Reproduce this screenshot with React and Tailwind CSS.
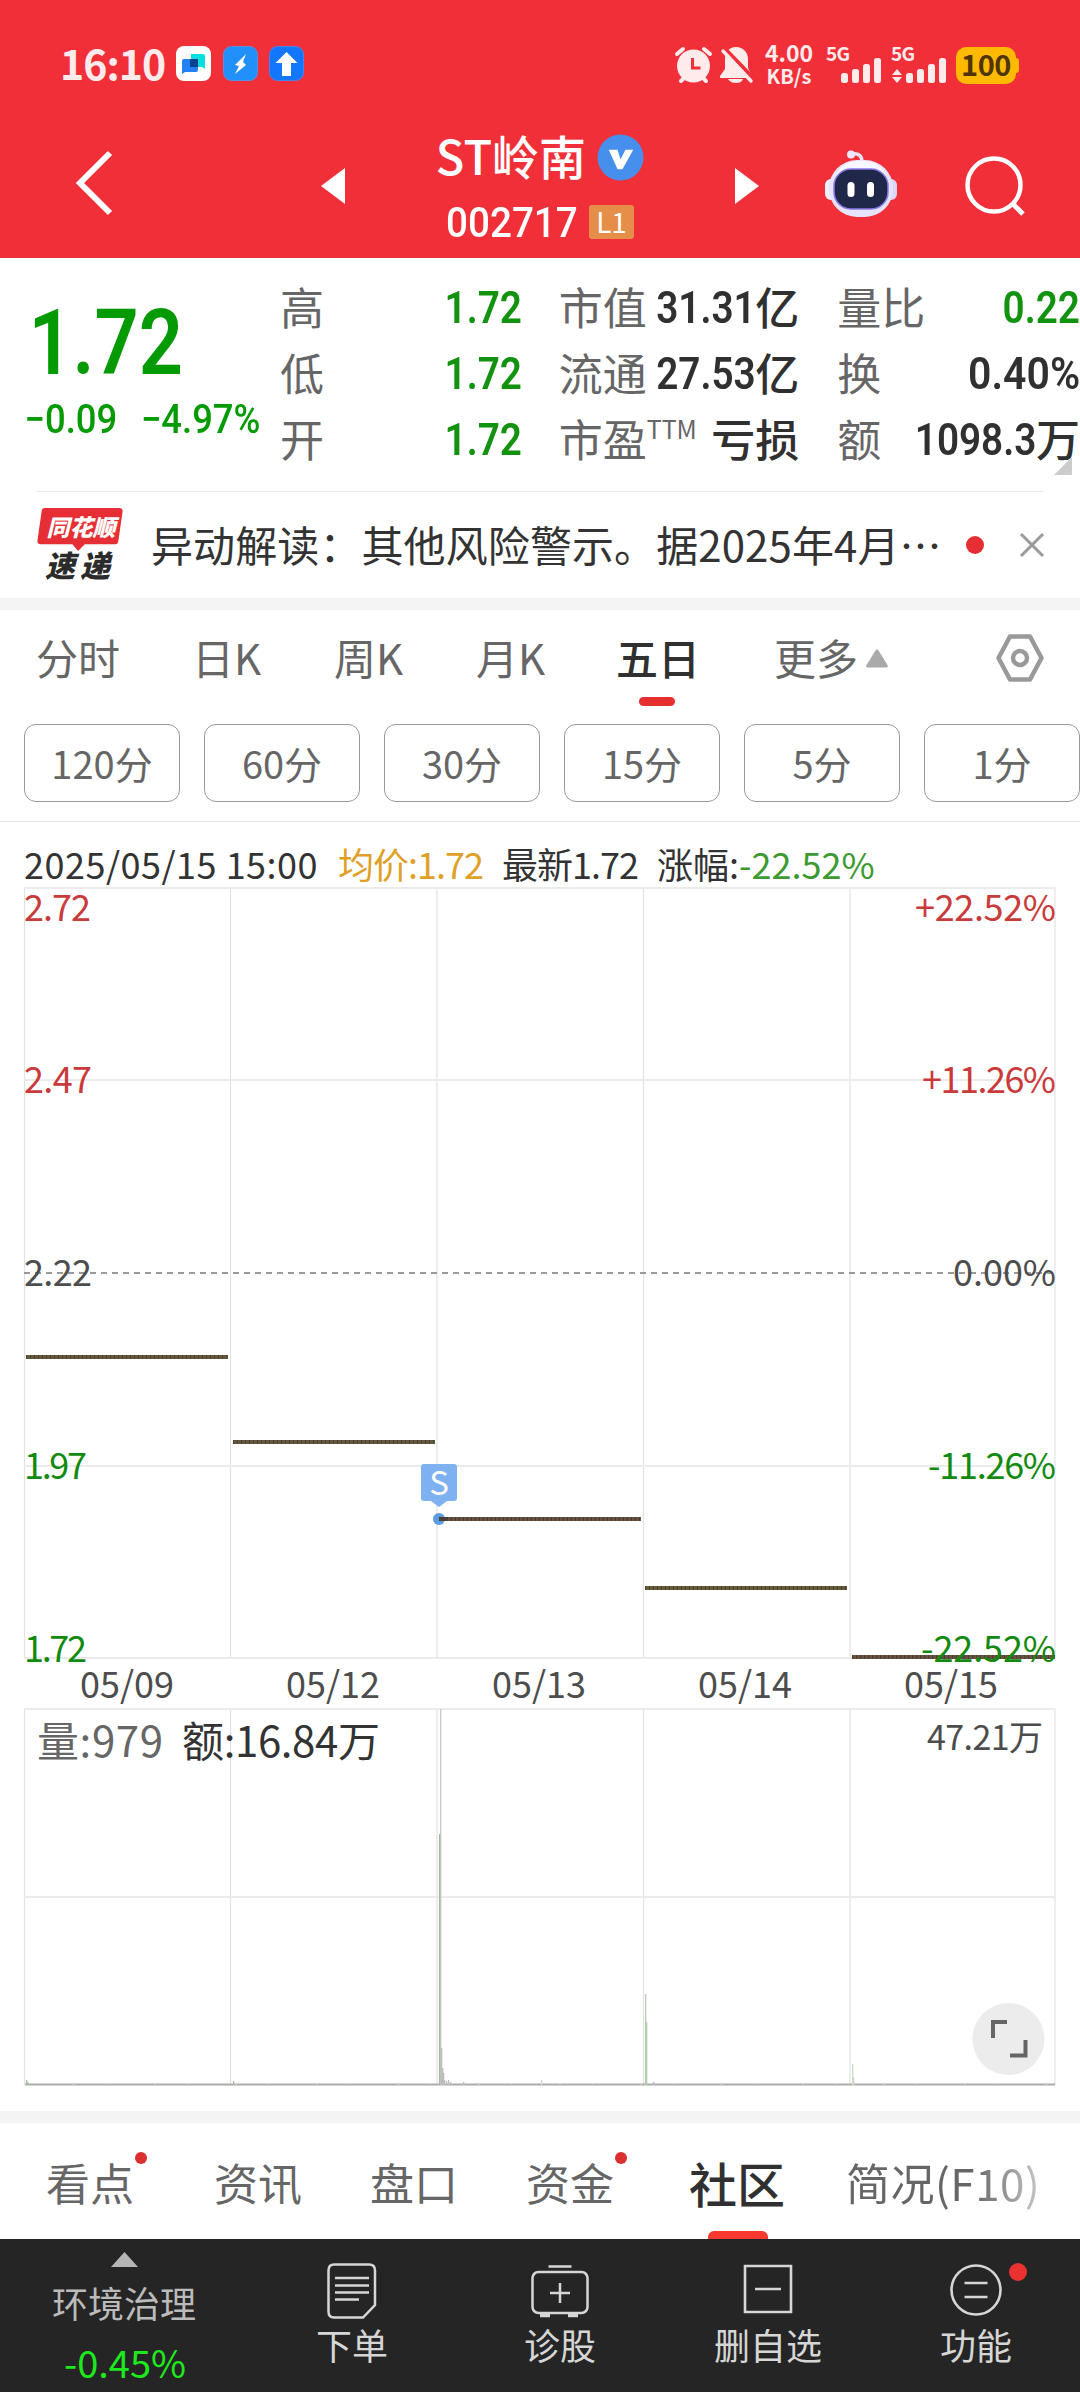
import { useState } from 'react';

const quoteRows = [
  [
    { label: '高', value: '1.72', green: true },
    { label: '低', value: '1.72', green: true },
    { label: '开', value: '1.72', green: true },
  ],
  [
    { label: '市值', value: '31.31', unit: '亿' },
    { label: '流通', value: '27.53', unit: '亿' },
    { label: '市盈', sup: 'TTM', unit: '亏损' },
  ],
  [
    { label: '量比', value: '0.22', green: true },
    { label: '换', value: '0.40%', wide: true },
    { label: '额', value: '1098.3', unit: '万' },
  ],
];

const periods = [
  { name: '分时', width: 'w-[156px]' },
  { name: '日K', width: 'w-[142px]' },
  { name: '周K', width: 'w-[142px]' },
  { name: '月K', width: 'w-[140px]' },
  { name: '五日', width: 'w-[148px]' },
];

const minutes = ['120分', '60分', '30分', '15分', '5分', '1分'];

const days = [
  { date: '05/09', x1: 26, x2: 228, y: 1357, color: '#665a3c' },
  { date: '05/12', x1: 233, x2: 435, y: 1442, color: '#66583f' },
  { date: '05/13', x1: 439, x2: 641, y: 1519, color: '#665040' },
  { date: '05/14', x1: 645, x2: 847, y: 1588, color: '#665c3e' },
  { date: '05/15', x1: 852, x2: 1055, y: 1657, color: '#665040' },
];

const priceLabels = [
  { price: '2.72', pct: '+22.52%', y: 921, color: '#c93a3a', w: 67, pw: 141 },
  { price: '2.47', pct: '+11.26%', y: 1093, color: '#c93a3a', w: 68, pw: 134 },
  { price: '2.22', pct: '0.00%', y: 1286, color: '#4d4d4d', w: 68, pw: 103 },
  { price: '1.97', pct: '-11.26%', y: 1479, color: '#12890f', w: 63, pw: 128 },
  { price: '1.72', pct: '-22.52%', y: 1662, color: '#12890f', w: 63, pw: 135 },
];

// x, top, colour of each visible volume bar
const volumes = [
  [26, 2080, '#a3bf9c'], [27, 2082, '#a3bf9c'],
  [233, 2081, '#a3bf9c'],
  [440, 1709, '#c9c9c9'], [439, 1834, '#9dbd97'], [441, 2048, '#bdbdbd'], [442, 2068, '#bdbdbd'],
  [443, 2073, '#bdbdbd'], [444, 2080, '#bdbdbd'], [446, 2081, '#bdbdbd'], [448, 2080, '#bdbdbd'], [450, 2082, '#bdbdbd'],
  [463, 2082, '#bdbdbd'], [541, 2080, '#d5d5d5'],
  [645, 1994, '#b3cbae'], [646, 2022, '#b3cbae'], [653, 2082, '#bdbdbd'],
  [852, 2064, '#cbdcc2'], [853, 2077, '#d5d5d5'],
];

const sections = [
  { name: '看点', margin: 'ml-[46px]', dot: true },
  { name: '资讯', margin: 'ml-[80px]' },
  { name: '盘口', margin: 'ml-[68px]' },
  { name: '资金', margin: 'ml-[68px]', dot: true },
];

function StatusBar() {
  return (
    <div className="h-[128px] flex items-center text-[#ffeaec]">
      <div className="w-[101px] ml-[60px] pb-[4px] text-[41px] leading-none font-bold tracking-[-1px] whitespace-nowrap">16:10</div>
      <svg className="ml-[15px] w-[129px] h-[36px]" viewBox="0 0 129 36">
        <rect x="0" y="0" width="35" height="35" rx="8" fill="#fff" />
        <path d="M15 8h12q2 0 2 2v13l-3-2H15z" fill="#06dfe0" />
        <path d="M6 15q0-2 2-2h12q2 0 2 2v9q0 2-2 2H9l-3 2z" fill="#2480f5" />
        <rect x="14" y="13" width="8" height="8" fill="#07428f" />
        <rect x="47.5" y=".5" width="34" height="34" rx="8" fill="#2190fa" stroke="#5a8fe8" />
        <path d="M70 8L59 19l4 1-4 8 11-9-3-3z" fill="#fff" />
        <rect x="93.5" y=".5" width="34" height="34" rx="8" fill="#1276ff" stroke="#4b83ee" />
        <path d="M110.500 6l11 11h-6.500v13h-9V17h-6.500z" fill="#fff" />
      </svg>
      <svg className="ml-[369px] mt-[2px] w-[80px] h-[38px]" viewBox="0 0 80 38">
        <g stroke="#ffeaec" strokeWidth="4" strokeLinecap="round">
          <path d="M3 8l6-5M36 8l-6-5M7 35l5-5M32 35l-5-5" />
        </g>
        <circle cx="19.500" cy="20" r="16.500" fill="#ffeaec" />
        <path d="M18.500 12v10h8" fill="none" stroke="#f12f38" strokeWidth="3" />
        <path d="M62 1c7 0 12 5 12 12v9l4 8v2H46v-2l5-7V13c0-7 4-12 11-12z" fill="#ffeaec" />
        <path d="M54 33h15c-1 3-4 4-7 4s-6-1-8-4z" fill="#ffeaec" />
        <path d="M51 3l29 30" stroke="#f12f38" strokeWidth="4" />
        <path d="M49 5l28 30" stroke="#ffeaec" strokeWidth="3.500" strokeLinecap="round" />
      </svg>
      <div className="ml-[9px] w-[52px] h-[46px] flex flex-col justify-between items-center font-bold whitespace-nowrap">
        <div className="text-[23px] leading-[23px]">4.00</div>
        <div className="text-[20px] leading-[23px]">KB/s</div>
      </div>
      <svg className="ml-[9px] mt-[2px] w-[131px] h-[38px] font-bold overflow-visible" viewBox="0 0 131 38">
        <g fill="#ffeaec">
          <text x="2" y="15" fontSize="19" textLength="24">5G</text>
          <rect x="17" y="27" width="7" height="10" rx="2.500" />
          <rect x="28" y="23" width="7" height="14" rx="2.500" />
          <rect x="39" y="18" width="7" height="19" rx="2.500" />
          <rect x="50" y="12" width="7" height="25" rx="2.500" />
          <text x="67" y="15" fontSize="19" textLength="24">5G</text>
          <path d="M68 29l5-6 5 6zM68 31l5 6 5-6z" />
          <rect x="82" y="27" width="7" height="10" rx="2.500" />
          <rect x="93" y="23" width="7" height="14" rx="2.500" />
          <rect x="104" y="18" width="7" height="19" rx="2.500" />
          <rect x="115" y="12" width="7" height="25" rx="2.500" />
        </g>
      </svg>
      <div className="ml-[1px] mt-[2px] flex items-center">
        <div className="w-[60px] h-[37px] pb-[4px] rounded-[10px] bg-[#ffb900] text-[#4f3500] flex items-center justify-center text-[29px] leading-none font-bold tracking-[-0.5px]">100</div>
        <div className="w-[3px] h-[15px] rounded-r-sm bg-[#ffb900]" />
      </div>
    </div>
  );
}

function Robot() {
  return (
    <svg className="w-[72px] h-[68px]" viewBox="0 0 72 68">
      <path d="M27 4c7-1 10 2 10 8" fill="none" stroke="#e9e3fa" strokeWidth="3.500" />
      <circle cx="26" cy="4.500" r="4" fill="#ece7fb" />
      <rect x="0" y="29" width="12" height="21" rx="6" fill="#eef0ff" />
      <rect x="60" y="29" width="12" height="21" rx="6" fill="#dcd7f8" />
      <rect x="4" y="10" width="64" height="57" rx="28" fill="#e6e4fa" />
      <path d="M10 27C16 13 26 11 36 11s20 2 26 16C50 17 22 17 10 27z" fill="#f8f7ff" />
      <rect x="9" y="19" width="54" height="40" rx="17" fill="#20284a" stroke="#8a78e8" strokeWidth="1.500" />
      <rect x="22.500" y="32" width="7" height="15" rx="3.500" fill="#fff" />
      <rect x="42" y="32" width="7" height="15" rx="3.500" fill="#fff" />
    </svg>
  );
}

function Header() {
  return (
    <header className="h-[258px] bg-[#f12f38] text-white">
      <StatusBar />
      <div className="h-[130px] flex items-start">
        <svg className="ml-[75px] mt-[21px] w-[40px] h-[68px]" viewBox="0 0 40 68">
          <path d="M35 4L5 34l30 30" fill="none" stroke="#fff" strokeWidth="6" />
        </svg>
        <svg className="ml-[206px] mt-[40px] w-[24px] h-[36px]" viewBox="0 0 24 36"><path d="M24 0v36L0 18z" fill="#fff" /></svg>
        <div className="w-[390px] flex flex-col items-center">
          <div className="h-[58px] flex items-center gap-[11px]">
            <span className="pb-[5px] text-[47px] leading-none font-medium">ST岭南</span>
            <svg className="w-[47px] h-[47px]" viewBox="0 0 48 48">
              <circle cx="24" cy="24" r="23.500" fill="#468fec" />
              <path d="M12 16h9l3 10 5-10h8L26 36h-5z" fill="#fff" />
            </svg>
          </div>
          <div className="h-[72px] flex items-center gap-[12px]">
            <span className="mt-[2px] font-[Roboto] text-[42px] leading-none font-medium w-[131px] whitespace-nowrap origin-left scale-x-[.92]">002717</span>
            <span className="w-[45px] h-[34px] pb-[3px] rounded-[3px] bg-[#e58e4a] flex items-center justify-center text-[28px] leading-none">L1</span>
          </div>
        </div>
        <svg className="mt-[40px] w-[24px] h-[36px]" viewBox="0 0 24 36"><path d="M0 0v36l24-18z" fill="#fff" /></svg>
        <div className="ml-[66px] mt-[22px]"><Robot /></div>
        <svg className="ml-[68px] mt-[26px] w-[62px] h-[64px]" viewBox="0 0 62 64">
          <circle cx="29" cy="31" r="26.500" fill="none" stroke="#fff" strokeWidth="4.500" />
          <path d="M47 49l11 11" stroke="#fff" strokeWidth="5" />
        </svg>
      </div>
    </header>
  );
}

function QuoteCell({ item }) {
  return (
    <div className="h-[66px] flex items-center justify-between">
      <span className="pb-[3px] text-[#666] text-[44px] leading-none whitespace-nowrap">
        {item.label}
        {item.sup && <sup className="text-[25px] -top-[18px]">{item.sup}</sup>}
      </span>
      <span className={`-ml-8 flex items-center leading-none whitespace-nowrap font-medium ${item.green ? 'text-[#12920f]' : 'text-[#303030]'}`}>
        {item.value && <span className={`font-[Roboto] font-semibold text-[45px] leading-none origin-right ${item.wide ? 'scale-x-[.91]' : 'scale-x-[.86]'}`}>{item.value}</span>}
        {item.unit && <span className="pb-[3px] text-[44px]">{item.unit}</span>}
      </span>
    </div>
  );
}

function Quote() {
  return (
    <section className="relative h-[233px] flex">
      <div className="w-[280px] pt-[44px] text-[#049a04] font-[Roboto] font-semibold whitespace-nowrap">
        <div className="pl-[33px] h-[87px] text-[90px] leading-[84px] origin-left scale-x-[.86]">1.72</div>
        <div className="pl-[27px] h-[62px] flex items-center gap-[26px] text-[40px] leading-none font-medium origin-left scale-x-[.91]">
          <span>−0.09</span>
          <span>−4.97%</span>
        </div>
      </div>
      {quoteRows.map((col, i) => (
        <div key={i} className={`pt-[16px] ${i === 0 ? 'w-[242px]' : i === 1 ? 'ml-[37px] w-[241px]' : 'ml-[38px] w-[243px]'}`}>
          {col.map((item) => <QuoteCell key={item.label} item={item} />)}
        </div>
      ))}
      <svg className="absolute left-[1054px] top-[199px] w-[18px] h-[18px]" viewBox="0 0 18 18"><path d="M18 0v18H0z" fill="#ccc" /></svg>
    </section>
  );
}

function News() {
  return (
    <section className="mx-[36px] h-[107px] border-t border-[#eaeaea] flex items-center">
      <div className="w-[90px] h-[74px] shrink-0">
        <div className="relative h-[38px] flex items-center justify-center">
          <svg className="absolute left-0 top-0 w-[88px] h-[44px]" viewBox="0 0 90 46">
            <path d="M8 0h78q4 0 3.500 4L85 35q-.5 3-4 3H50l-7 7-6-7H4q-4 0-3.500-4L5 3q.5-3 3-3z" fill="#e62f34" />
          </svg>
          <span className="relative pb-[2px] text-white text-[23px] leading-none font-black italic">同花顺</span>
        </div>
        <div className="h-[36px] pt-[3px] pl-[9px] text-[#2b2b2b] text-[30px] leading-[30px] font-black italic tracking-[5px] whitespace-nowrap">速递</div>
      </div>
      <p className="ml-[25px] pb-[2px] w-[792px] shrink-0 text-[42px] leading-none tracking-[0.1px] text-[#333] whitespace-nowrap">异动解读：其他风险警示。据2025年4月⋯</p>
      <span className="ml-[23px] w-[18px] h-[18px] shrink-0 rounded-full bg-[#e62f34]" />
      <svg className="ml-[35px] w-[26px] h-[26px] shrink-0" viewBox="0 0 26 26"><path d="M2 2l22 22M24 2L2 24" stroke="#999" strokeWidth="3" /></svg>
    </section>
  );
}

function Periods() {
  const [active, setActive] = useState('五日');

  return (
    <section className="border-t-[12px] border-[#f4f4f4] h-[223px]">
      <div className="h-[114px] pl-[36px] flex text-[42px] leading-none text-[#666]">
        {periods.map((p) => (
          <button key={p.name} onClick={() => setActive(p.name)} className={`${p.width} shrink-0 h-[98px] flex flex-col items-start`}>
            <span className={`mt-[26px] whitespace-nowrap relative ${active === p.name ? 'text-[#303030] font-medium' : ''}`}>
              {p.name}
              {active === p.name && <span className="absolute left-[23px] top-[61px] w-[36px] h-[9px] rounded-full bg-[#e62f2f]" />}
            </span>
          </button>
        ))}
        <div className="mt-[26px] ml-[10px] w-[92px] shrink-0 whitespace-nowrap">更多</div>
        <svg className="mt-[39px] w-[22px] h-[19px]" viewBox="0 0 22 19"><path d="M9.500 1.500q1.500-2 3 0L21.500 16q1 2.500-1.500 2.500H2Q-.5 18.500.5 16z" fill="#aaa" /></svg>
        <svg className="ml-[108px] mt-[24px] w-[48px] h-[48px]" viewBox="0 0 48 48">
          <path d="M14 2.500h20L45.500 24 34 45.500H14L2.500 24z" fill="none" stroke="#999" strokeWidth="4.500" strokeLinejoin="round" />
          <circle cx="24" cy="24" r="7" fill="none" stroke="#999" strokeWidth="4.500" />
        </svg>
      </div>
      <div className="pl-[24px] flex gap-[24px] overflow-hidden">
        {minutes.map((m) => (
          <button key={m} className="w-[156px] h-[78px] shrink-0 rounded-[12px] border border-[#999] text-[38px] leading-none text-[#666] flex items-center justify-center pb-[1px]">{m}</button>
        ))}
      </div>
    </section>
  );
}

function Chart() {
  const columns = [24.5, 230.5, 437, 643.5, 850, 1055];

  return (
    <svg className="w-[1080px] h-[1224px] block" viewBox="0 887 1080 1224">
      <g stroke="#e2e2e2">
        {columns.map((x) => (
          <g key={x}>
            <path d={`M${x} 888V1658`} strokeWidth="1.2" />
            <path d={`M${x} 1709V2085`} strokeWidth="1.2" />
          </g>
        ))}
        {[888, 1080, 1466, 1658, 1709, 1897].map((y) => <path key={y} d={`M24 ${y}H1055.500`} strokeWidth="2" stroke="#ebebeb" />)}
      </g>
      <path d="M24 1273H1055" stroke="#999" strokeWidth="2" strokeDasharray="6 5" />

      {days.map((d) => (
        <g key={d.date}>
          <path d={`M${d.x1} ${d.y}H${d.x2}`} stroke={d.color} strokeWidth="4" />
          <path d={`M${d.x1} ${d.y}H${d.x2}`} stroke="#4a3f33" strokeWidth="4" strokeDasharray="1 3" />
        </g>
      ))}

      <circle cx="439" cy="1519" r="6" fill="#5f9be0" />
      <path d="M439 1519h8" stroke="#4a4038" strokeWidth="4" />
      <path d="M424 1464h30q3 0 3 3v31q0 3-3 3h-7l-8 6-8-6h-7q-3 0-3-3v-31q0-3 3-3z" fill="#7db1f0" />
      <text x="439" y="1494.500" fontSize="33" fill="#fff" textAnchor="middle">S</text>

      <g fontSize="36">
        {priceLabels.map((l) => (
          <g key={l.pct} fill={l.color}>
            <text x="24" y={l.y} textLength={l.w}>{l.price}</text>
            <text x={1056 - l.pw} y={l.y} textLength={l.pw}>{l.pct}</text>
          </g>
        ))}
        {days.map((d, i) => (
          <text key={d.date} x={127 + i * 206} y="1698" fill="#4d4d4d" textAnchor="middle">{d.date}</text>
        ))}
      </g>

      <path d="M25 2084.500H1055" stroke="#ababab" strokeWidth="2" />
      <path d="M25 2084.500H1055" stroke="#c8c8c8" strokeWidth="2" strokeDasharray="1 47 2 31" />
      {volumes.map(([x, top, color]) => <rect key={x} x={x} y={top} width="1.300" height={2085 - top} fill={color} />)}

      <text x="37" y="1757" fontSize="42" fill="#666" textLength="126">量:979</text>
      <text x="182" y="1757" fontSize="42" fill="#333" textLength="198">额:16.84万</text>
      <text x="927" y="1750" fontSize="34" fill="#4d4d4d" textLength="116">47.21万</text>

      <circle cx="1008.500" cy="2039" r="36" fill="#ececec" />
      <path d="M993 2038v-16h14M1010 2055.500h15.500V2040" fill="none" stroke="#666" strokeWidth="4" />
    </svg>
  );
}

function Sections() {
  return (
    <section className="h-[128px] border-t-[12px] border-[#f4f4f4] flex text-[44px] leading-none text-[#666] whitespace-nowrap">
      {sections.map((s) => (
        <div key={s.name} className={`${s.margin} mt-[37px] w-[88px] relative`}>
          {s.name}
          {s.dot && <span className="absolute left-[89px] -top-[8px] w-[12px] h-[12px] rounded-full bg-[#dc2f2f]" />}
        </div>
      ))}
      <div className="ml-[75px] mt-[35px] w-[96px] h-[80px] relative text-[48px] leading-none font-medium text-[#303030]">
        社区
        <span className="absolute left-[19px] top-[73px] w-[60px] h-[12px] rounded-t-[6px] bg-[#fa3a30]" />
      </div>
      <div className="ml-[61px] h-[100px] pt-[37px] bg-linear-to-r from-[#666] from-65% to-[#c8c8c8] bg-clip-text text-transparent tracking-[0.5px]">简况(F10)</div>
    </section>
  );
}

function BottomBar() {
  return (
    <nav className="relative h-[153px] bg-[#252525] text-[#d6d6d6] text-[36px] leading-none flex whitespace-nowrap">
      <div className="w-[248px] flex flex-col items-center text-[#bbb]">
        <svg className="mt-[13px] w-[27px] h-[15px]" viewBox="0 0 27 15"><path d="M13.500 0L27 15H0z" fill="#b5b5b5" /></svg>
        <span className="mt-[17px]">环境治理</span>
        <span className="mt-[23px] ml-[2px] text-[38px] text-[#1ee91e]">-0.45%</span>
      </div>
      <div className="w-[208px] flex flex-col items-center">
        <svg className="mt-[24px] w-[50px] h-[56px]" viewBox="0 0 50 56" fill="none" stroke="#d6d6d6" strokeWidth="2.500">
          <path d="M7 1.500h35q6 0 6 6V42L36 54.500H7q-5.500 0-5.500-6v-41q0-6 5.500-6z" />
          <path d="M8 15h34M8 22.500h34M8 29.500h34M8 36.500h24" />
        </svg>
        <span className="mt-[7px]">下单</span>
      </div>
      <div className="w-[208px] flex flex-col items-center">
        <svg className="mt-[24px] w-[58px] h-[56px]" viewBox="0 0 58 56" fill="none" stroke="#d6d6d6" strokeWidth="2.500">
          <path d="M17.500 3.500h23" />
          <rect x="1.500" y="9" width="55" height="41" rx="6" />
          <path d="M29 20v20M19 30h20" />
          <path d="M9 52.500h10M37 52.500h10" strokeWidth="3.500" />
        </svg>
        <span className="mt-[7px]">诊股</span>
      </div>
      <div className="w-[208px] flex flex-col items-center">
        <svg className="mt-[24px] w-[50px] h-[56px]" viewBox="0 0 50 56" fill="none" stroke="#d6d6d6" strokeWidth="2.600">
          <path d="M2 3h46v46H2zM12 26h26" />
        </svg>
        <span className="mt-[7px]">删自选</span>
      </div>
      <div className="w-[208px] flex flex-col items-center">
        <svg className="mt-[24px] w-[52px] h-[56px]" viewBox="0 0 52 56" fill="none" stroke="#d6d6d6" strokeWidth="2.600">
          <circle cx="26" cy="27" r="24.500" />
          <path d="M14.500 20h23M14.500 34h23" />
        </svg>
        <span className="mt-[7px]">功能</span>
      </div>
      <span className="absolute left-[1009px] top-[24px] w-[18px] h-[18px] rounded-full bg-[#ea3232]" />
    </nav>
  );
}

export default function App() {
  return (
    <div className="w-[1080px] h-[2392px] overflow-hidden bg-white font-['Noto_Sans_CJK_SC',sans-serif]">
      <Header />
      <Quote />
      <News />
      <Periods />
      <div className="h-[66px] border-t border-[#e6e6e6] pl-[24px] pt-[23px] flex text-[36px] leading-none text-[#333] whitespace-nowrap">
        <span className="w-[314px] tracking-[0.5px]">2025/05/15 15:00</span>
        <span className="w-[164px] tracking-[-1px] text-[#dfa028]">均价:1.72</span>
        <span className="w-[155px] tracking-[-1px]">最新1.72</span>
        <span>涨幅:<span className="text-[#3d9a30]">-22.52%</span></span>
      </div>
      <Chart />
      <Sections />
      <BottomBar />
    </div>
  );
}
